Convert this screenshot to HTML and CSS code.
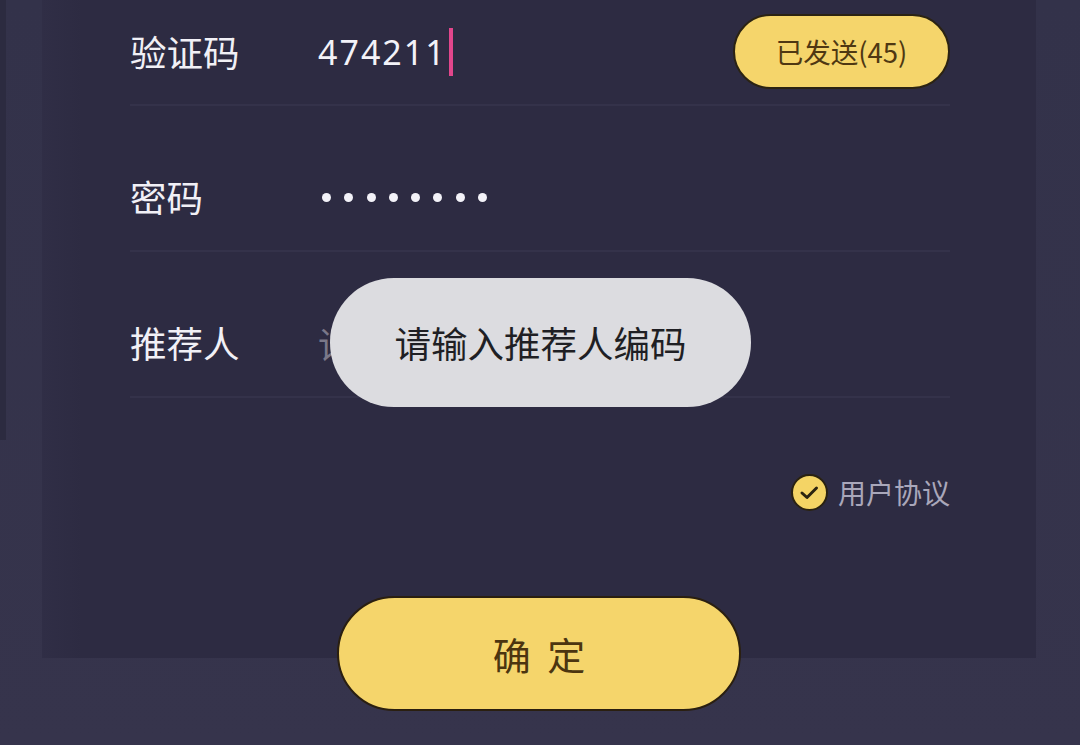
FILE: index.html
```html
<!DOCTYPE html>
<html lang="zh-CN">
<head>
<meta charset="utf-8">
<title>注册</title>
<link rel="stylesheet" href="styles.css">
</head>
<body>
<div class="page">
  <div class="edge"></div>
  <div class="card">
    <div class="form">
      <div class="row first">
        <div class="label">验证码</div>
        <div class="value code">474211<span class="caret"></span></div>
        <button class="send">已发送(45)</button>
      </div>
      <div class="row">
        <div class="label">密码</div>
        <div class="value dots">
          <span></span><span></span><span></span><span></span><span></span><span></span><span></span><span></span>
        </div>
      </div>
      <div class="row">
        <div class="label">推荐人</div>
        <div class="value placeholder">请输入推荐人编码</div>
      </div>
      <div class="agree">
        <span class="check">
          <svg viewBox="0 0 37 37" width="37" height="37">
            <circle cx="18.5" cy="18.5" r="17.5" fill="#f4d465" stroke="#2a2210" stroke-width="2"/>
            <path d="M11 19 L16 23.5 L25.5 14" fill="none" stroke="#2b2410" stroke-width="3" stroke-linecap="round" stroke-linejoin="round"/>
          </svg>
        </span>
        <span class="agree-text">用户协议</span>
      </div>
      <div class="submit-wrap">
        <button class="submit">确 定</button>
      </div>
    </div>
  </div>
  <div class="toast">请输入推荐人编码</div>
</div>
</body>
</html>
```

FILE: styles.css
```css
* { box-sizing: border-box; }
html, body {
  margin: 0;
  padding: 0;
  width: 1080px;
  height: 745px;
  overflow: hidden;
  background: #35334b;
  font-family: "Noto Sans CJK SC", "Noto Sans", sans-serif;
}
.page {
  position: relative;
  width: 1080px;
  height: 745px;
  background: linear-gradient(180deg, #33324a 0%, #36344c 100%);
}
.edge {
  position: absolute;
  left: 0;
  top: 0;
  width: 6px;
  height: 440px;
  background: #2c2b40;
}
.card {
  margin-left: 42px;
  width: 994px;
  height: 658px;
  background: linear-gradient(90deg, #302e46 0px, #2d2b42 40px, #2d2b42 100%);
}
.form {
  margin-left: 88px;
  width: 820px;
}
.row {
  display: flex;
  align-items: center;
  height: 146px;
  padding-top: 38px;
  border-bottom: 2px solid #34324a;
}
.row.first {
  height: 106px;
  padding-top: 0;
}
.label {
  width: 188px;
  flex: none;
  color: #f1f0f6;
  font-size: 36.5px;
  line-height: 44px;
}
.value {
  flex: 1;
  color: #f3f2f8;
  font-size: 34px;
  line-height: 44px;
}
.code {
  display: flex;
  align-items: center;
  letter-spacing: 2px;
  font-family: "Noto Sans", "Noto Sans CJK SC", sans-serif;
}
.caret {
  display: inline-block;
  width: 4px;
  height: 48px;
  margin-left: 2px;
  background: #e2468c;
}
.send {
  flex: none;
  width: 217px;
  height: 75px;
  border: 2px solid #2b2312;
  border-radius: 38px;
  background: #f5d56b;
  color: #4f3812;
  font-family: "Noto Sans CJK SC", "Noto Sans", sans-serif;
  font-size: 27.5px;
  padding: 0;
  margin-top: -2px;
}
.dots {
  display: flex;
  align-items: center;
  gap: 13.3px;
  padding-left: 4px;
  height: 44px;
}
.dots span {
  width: 9px;
  height: 9px;
  border-radius: 50%;
  background: #f3f2f8;
}
.placeholder {
  color: #7a7889;
  font-size: 36px;
}
.agree {
  display: flex;
  justify-content: flex-end;
  align-items: center;
  gap: 10px;
  margin-top: 74px;
  height: 40px;
}
.check {
  display: flex;
  width: 37px;
  height: 37px;
}
.agree-text {
  color: #a9a7ba;
  font-size: 28px;
  line-height: 40px;
}
.submit-wrap {
  display: flex;
  justify-content: center;
  margin-top: 84px;
  margin-left: -88px;
  width: 994px;
}
.submit {
  width: 404px;
  height: 115px;
  border: 2.5px solid #2a1f10;
  border-radius: 58px;
  background: #f5d56b;
  color: #4c3510;
  font-family: "Noto Sans CJK SC", "Noto Sans", sans-serif;
  font-size: 38px;
  letter-spacing: 4px;
  padding: 0 0 0 4px;
}
.toast {
  position: absolute;
  left: 330px;
  top: 278px;
  width: 421px;
  height: 129px;
  border-radius: 64px;
  background: #dcdce0;
  color: #1f1f24;
  font-size: 36.5px;
  display: flex;
  align-items: center;
  justify-content: center;
}
```
